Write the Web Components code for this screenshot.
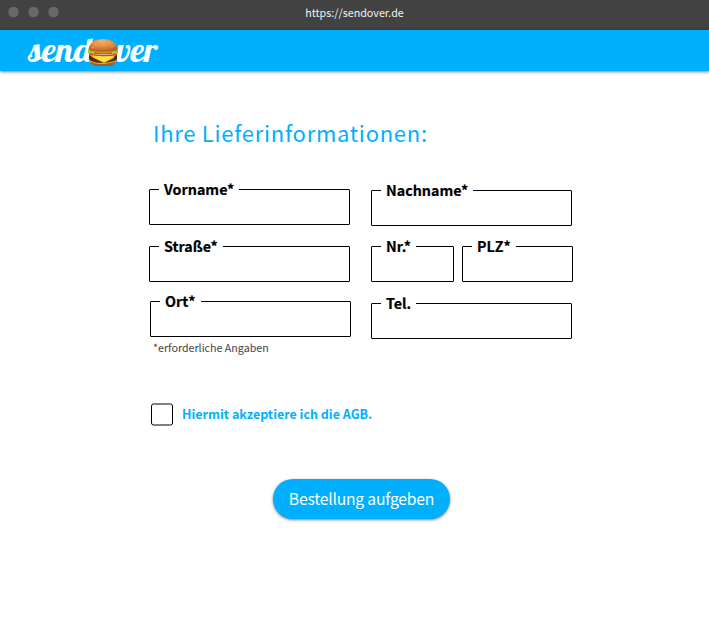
<!DOCTYPE html>
<html lang="de">
<head>
<meta charset="utf-8">
<title>sendover</title>
<style>
html,body{margin:0;height:100%;background:#fff;font-family:"Noto Sans CJK SC","Noto Sans",sans-serif;overflow:hidden}
</style>
</head>
<body>
<order-page></order-page>
<script>
const define = (name, html) => customElements.define(name, class extends HTMLElement {
  constructor() {
    super();
    const t = document.createElement('template');
    t.innerHTML = html;
    this.attachShadow({mode: 'open'}).append(t.content.cloneNode(true));
  }
});

define('window-bar', `<style>
:host{display:grid;grid-template-columns:1fr auto 1fr;height:30px;background:#424242;color:#f2f2f2}
.dots{padding:7px 0 0 8px}
.dots svg{display:block}
.url{font-size:10.750px;line-height:16px;padding-top:5px}
</style><div class="dots"><svg width="52" height="11" fill="#686868"><circle cx="5.500" cy="5" r="5.200"/><circle cx="25.500" cy="5" r="5.200"/><circle cx="45.500" cy="5" r="5.200"/></svg></div><div class="url"><slot></slot></div>`);

define('burger-icon', `<style>:host{display:block;width:32px;height:29px}svg{display:block}</style>
<svg width="32" height="29" viewBox="0 0 32 29">
<defs>
<radialGradient id="b" cx=".45" cy=".2" r=".8"><stop offset="0" stop-color="#f3ae62"/><stop offset=".5" stop-color="#e28e42"/><stop offset="1" stop-color="#b85d1c"/></radialGradient>
<linearGradient id="u" x2="0" y2="1"><stop offset="0" stop-color="#d9822f"/><stop offset="1" stop-color="#9d5718"/></linearGradient>
</defs>
<path d="M2 19Q2 27.5 10 27.8H22Q30 27.5 30 19Z" fill="url(#u)"/>
<path d="M2 17Q16 23 30 17L30 21Q28 25 22 25H10Q4 25 2 21Z" fill="#5c2812"/>
<path d="M3 23Q9 26 16 25.5T29 23" fill="none" stroke="#e3b23c" stroke-width="1"/>
<path d="M3 16.500L29 16.500 26 20 17 24.800 6 19.500Z" fill="#ffe33b"/>
<path d="M3 17Q9 21 17 24.500L27 19.500" fill="none" stroke="#f5b400" stroke-width=".8"/>
<path d="M2 14Q16 16 30 14V17Q24 18.500 16 18.300T2 17Z" fill="#d93c24"/>
<path d="M6 15.300Q16 17 26 15.600" fill="none" stroke="#f7d6c4" stroke-width="1.300"/>
<path d="M1 12Q16 16 31 12L31 15Q30 17 28.500 15.500 26.500 17 24.500 15.300 20 16.500 17 15.300 12 16.500 9 15.200 6.500 17.500 4.500 15.300 2 17 1 15Z" fill="#9ccb25"/>
<path d="M7 14.900Q16 16.200 25 15" fill="none" stroke="#e9452e" stroke-width="1.500"/>
<path d="M1.500 11.500C2 4.500 8 1 16 1S30 4.500 30.500 11.500C30.500 13 24 13.500 16 13.500S1.500 13 1.500 11.500Z" fill="url(#b)"/>
<g fill="#fbd28d"><circle cx="9" cy="6" r=".6"/><circle cx="14" cy="3.500" r=".6"/><circle cx="17" cy="7" r=".6"/><circle cx="22" cy="5" r=".6"/><circle cx="25" cy="8.500" r=".6"/><circle cx="6" cy="9.500" r=".6"/></g>
</svg>`);

define('brand-header', `<style>
:host{display:flex;height:41px;background:#00b0ff;box-shadow:0 1px 3px rgba(0,0,0,.5);box-sizing:border-box;padding-left:28px;color:#fff}
svg{display:block;overflow:visible}
text{font:normal 400 33.500px "Lobster","Liberation Serif",serif;fill:#fff}
burger-icon{margin:8px -4px 0 -5px;z-index:1}
</style><svg width="64" height="41"><text x=".7" y="32" textLength="62.500" lengthAdjust="spacingAndGlyphs">send</text></svg><burger-icon></burger-icon><svg width="44" height="41"><text x="1" y="32" textLength="41.500" lengthAdjust="spacingAndGlyphs">ver</text></svg>`);

define('text-field', `<style>
:host{display:block;width:201px;height:45px}
fieldset{box-sizing:border-box;margin:0;padding:0 9px;height:45px;min-width:0;border:1px solid #000;border-radius:1px}
legend{height:19px;padding:0 5px;font-size:14.300px;font-weight:700;line-height:18px;color:#000;white-space:nowrap;-webkit-text-stroke:.2px #000}
</style><fieldset><legend><slot></slot></legend></fieldset>`);

define('agb-check', `<style>
:host{display:flex;gap:9px;color:#00b0ff;font-weight:700;font-size:12.500px;line-height:20px;height:22px}
svg{display:block;overflow:visible}
</style><svg width="22" height="22"><rect x=".5" y="0" width="21" height="21" rx="2" fill="#fff" stroke="#000"/></svg><span><slot></slot></span>`);

define('pill-button', `<style>
:host{display:block}
button{display:block;width:177px;height:40px;padding:0;border:0;border-radius:20px;background:#00b0ff;color:#fff;font:400 15.700px/40px "Noto Sans CJK SC","Noto Sans",sans-serif;letter-spacing:-.2px;box-shadow:0 1px 3px rgba(0,0,0,.5);white-space:nowrap}
</style><button><slot></slot></button>`);

define('order-page', `<style>
:host{display:block}
main{padding:42px 0 0 149px}
h1{margin:0 0 0 4px;font-weight:400;font-size:22px;line-height:39px;height:41px;letter-spacing:.73px;color:#00b0ff;white-space:nowrap}
.cols{display:flex;gap:20px;padding-top:26px;height:157px}
.col{display:flex;flex-direction:column}
.left{width:202px}
.right{padding-top:1px}
.street{margin-top:12px}
.city{margin:10px 0 0 1px}
.pair{display:flex;gap:8px;margin-top:11px}
.tel{margin-top:12px}
.nr{width:83px}.plz{width:111px}
.note{margin:2px 0 0 4px;font-size:10.700px;line-height:18px;color:#424242}
agb-check{margin:47px 0 0 2px}
pill-button{margin:53px 0 0 124px}
</style>
<window-bar>https://sendover.de</window-bar>
<brand-header></brand-header>
<main>
<h1>Ihre Lieferinformationen:</h1>
<div class="cols">
<div class="col left"><text-field>Vorname*</text-field><text-field class="street">Straße*</text-field><text-field class="city">Ort*</text-field></div>
<div class="col right"><text-field>Nachname*</text-field><div class="pair"><text-field class="nr">Nr.*</text-field><text-field class="plz">PLZ*</text-field></div><text-field class="tel">Tel.</text-field></div>
</div>
<div class="note">*erforderliche Angaben</div>
<agb-check>Hiermit akzeptiere ich die AGB.</agb-check>
<pill-button>Bestellung aufgeben</pill-button>
</main>`);
</script>
</body>
</html>
